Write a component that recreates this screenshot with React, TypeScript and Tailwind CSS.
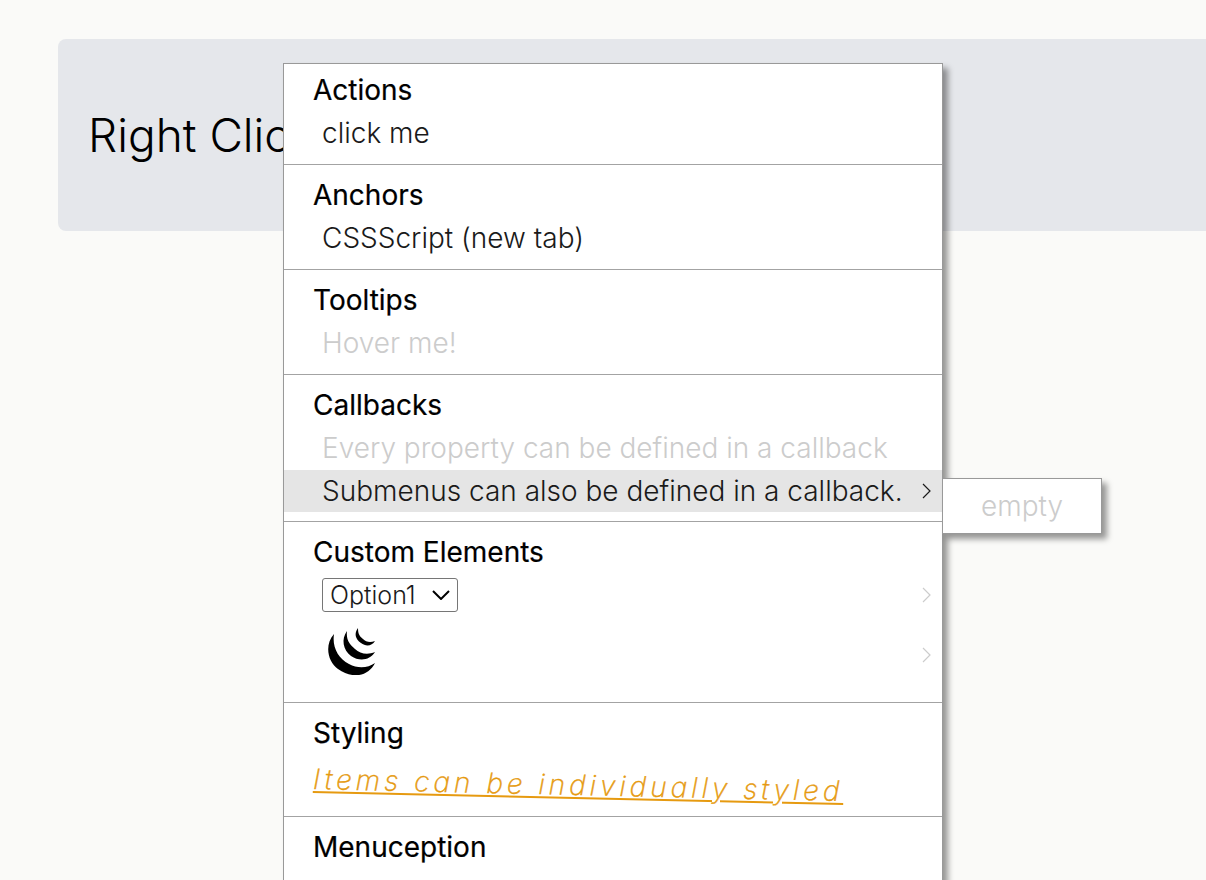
import type { ReactNode } from "react";

function Chevron({ className = "" }: { className?: string }) {
  return (
    <svg viewBox="0 0 9 16" className={"h-4 w-[9px] shrink-0 " + className} fill="none" stroke="currentColor" strokeWidth="1.2" aria-hidden="true">
      <path d="M1 1l7 7-7 7" />
    </svg>
  );
}

function JqueryLogo() {
  return (
    <svg viewBox="0 0 48 48" className="mb-2 ml-[6px] size-12 text-black" fill="currentColor" role="img" aria-label="jQuery">
      <path d="M6 7C-4 18 0 35 10 42C24 52 40 50 47 36C40 41 30 42 21 37C10 31 4 20 6 7z" />
      <path d="M19 4C13 12 15 23 23 29C32 35 42 33 47 25C40 28 32 27 27 22C21 17 18 12 19 4z" />
      <path d="M30 1C26 6 27 12 33 16C38 20 44 19 47 14C42 16 38 15 35 12C31 9 30 6 30 1z" />
    </svg>
  );
}

function Section({ title, children }: { title: string; children?: ReactNode }) {
  return (
    <section className="border-b border-[#a3a3a3] py-[9px] first:pt-[5px] last:border-b-0">
      <h2 className="flex h-[42px] items-center pl-[29px] font-normal text-black [-webkit-text-stroke:0.2px_black]">{title}</h2>
      {children}
    </section>
  );
}

const row = "flex w-full items-center pl-[38px] pr-[11px] text-left";

export default function App() {
  return (
    <main className="relative h-screen overflow-hidden bg-[#fafaf8] pt-[39px] pl-[58px] font-['Inter',sans-serif] font-light text-black">
      <div className="flex h-48 items-center rounded-l-lg bg-[#e5e7eb] px-[30px]">
        <h1 className="text-[46px] leading-none whitespace-nowrap">Right Click</h1>
      </div>

      <div className="absolute top-[63px] -bottom-10 left-[283px] w-max min-w-[660px] border border-[#999] bg-white text-[28px] leading-none whitespace-nowrap text-[#1a1a1a] shadow-[5px_5px_6px_rgba(0,0,0,0.4)]">
        <Section title="Actions">
          <button type="button" className={row + " h-11"}>click me</button>
        </Section>

        <Section title="Anchors">
          <a href="#cssscript" className={row + " h-11"}>CSSScript (new tab)</a>
        </Section>

        <Section title="Tooltips">
          <button type="button" disabled className={row + " h-11 text-[#ccc]"}>Hover me!</button>
        </Section>

        <Section title="Callbacks">
          <button type="button" disabled className={row + " h-11 text-[#ccc]"}>
            Every property can be defined in a callback
          </button>
          <div className="relative">
            <button type="button" aria-haspopup="menu" aria-expanded="true" className={row + " h-[42px] justify-between bg-[#e5e5e5]"}>
              Submenus can also be defined in a callback.
              <Chevron />
            </button>
            {/* submenu */}
            <div className="absolute top-2 left-full border border-[#999] bg-white py-[5px] shadow-[5px_5px_6px_rgba(0,0,0,0.4)]">
              <button type="button" disabled className="flex h-11 items-center px-[38px] text-[#ccc]">empty</button>
            </div>
          </div>
        </Section>

        <Section title="Custom Elements">
          <div className={row + " h-11 justify-between"}>
            <span className="relative flex items-center">
              <select aria-label="Option" className="h-[34px] w-[136px] appearance-none rounded-[3px] border border-[#767676] bg-white pl-[7px] text-[25px] leading-none">
                <option>Option1</option>
              </select>
              <svg viewBox="0 0 18 10" className="pointer-events-none absolute right-2 h-[10px] w-[18px] text-black" fill="none" stroke="currentColor" strokeWidth="2" aria-hidden="true">
                <path d="M1 1l8 8 8-8" />
              </svg>
            </span>
            <Chevron className="text-[#ccc]" />
          </div>
          <div className={row + " h-[76px] justify-between"}>
            <JqueryLogo />
            <Chevron className="text-[#ccc]" />
          </div>
        </Section>

        <Section title="Styling">
          <div className="flex h-[53px] items-center pt-[9px] pl-[29px]">
            <button type="button" className="rotate-[1.3deg] font-extralight tracking-[4px] text-[#e69a10] italic underline [-webkit-text-stroke:0.4px_#e69a10]">
              Items can be individually styled
            </button>
          </div>
        </Section>

        <Section title="Menuception" />
      </div>
    </main>
  );
}
